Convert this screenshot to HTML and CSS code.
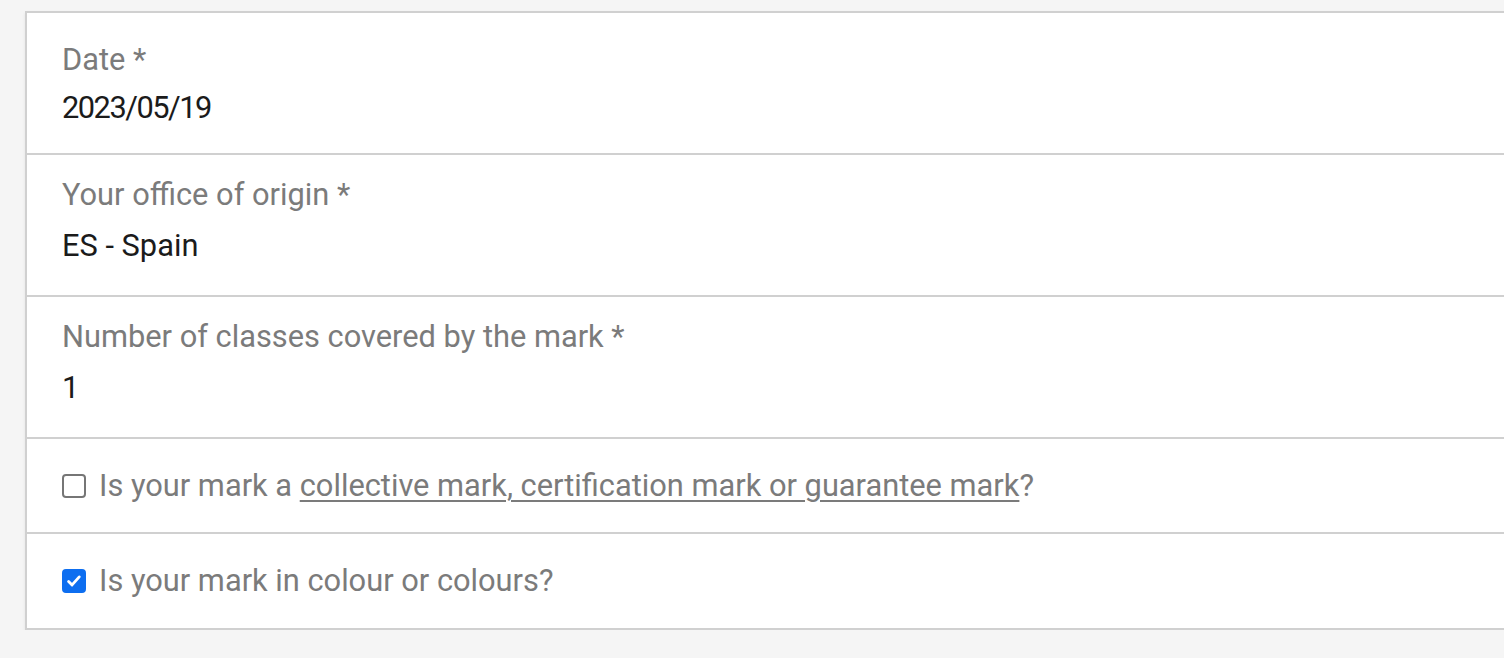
FILE: index.html
```html
<!DOCTYPE html>
<html lang="en">
<head>
<meta charset="utf-8">
<title>Trade mark details</title>
<link rel="stylesheet" href="styles.css">
</head>
<body>
<div class="page">
  <section class="panel">
    <div class="field field-first">
      <div class="label">Date *</div>
      <div class="value value-num">2023/05/19</div>
    </div>
    <div class="field">
      <div class="label">Your office of origin *</div>
      <div class="value">ES - Spain</div>
    </div>
    <div class="field">
      <div class="label">Number of classes covered by the mark *</div>
      <div class="value">1</div>
    </div>
    <div class="check-row">
      <span class="box"></span>
      <span class="check-text">Is your mark a <a class="link" href="#">collective mark, certification mark or guarantee mark</a>?</span>
    </div>
    <div class="check-row">
      <span class="box checked">
        <svg viewBox="0 0 24 24" width="24" height="24"><path d="M5.5 12.5l4.2 4.2 8.6-9.6" fill="none" stroke="#fff" stroke-width="3.4" stroke-linecap="round" stroke-linejoin="round"/></svg>
      </span>
      <span class="check-text">Is your mark in colour or colours?</span>
    </div>
  </section>
</div>
</body>
</html>
```
FILE: styles.css
```css
html, body {
  margin: 0;
  padding: 0;
  background: #f5f5f5;
}
body {
  font-family: Roboto, "Liberation Sans", sans-serif;
  overflow: hidden;
}
.page {
  padding: 11px 0 0 25px;
}
.panel {
  width: 1520px;
  background: #fff;
  border: 2px solid #d0d0d0;
  box-shadow: 0 2px 3px rgba(0,0,0,0.08);
}
.field {
  height: 142px;
  box-sizing: border-box;
  padding: 22px 0 0 35px;
  border-bottom: 2px solid #d0d0d0;
}
.field-first {
  padding-top: 29px;
}
.label {
  font-size: 30.8px;
  line-height: 36px;
  color: #7b7b7b;
}
.value {
  margin-top: 15px;
  font-size: 30.8px;
  line-height: 36px;
  color: #1b1b1b;
}
.field-first .value {
  margin-top: 12px;
}
.value-num {
  letter-spacing: -1.5px;
}
.check-row {
  height: 95px;
  box-sizing: border-box;
  display: flex;
  align-items: center;
  padding-left: 35px;
  border-bottom: 2px solid #d0d0d0;
}
.check-row:last-child {
  height: 94px;
  border-bottom: none;
}
.box {
  width: 24px;
  height: 24px;
  box-sizing: border-box;
  border: 2px solid #767676;
  border-radius: 4px;
  margin-right: 13px;
  flex: none;
  display: flex;
  align-items: center;
  justify-content: center;
}
.box.checked {
  background: #0d6ef0;
  border-color: #0d6ef0;
}
.box svg {
  width: 22px;
  height: 22px;
}
.check-text {
  font-size: 30.8px;
  line-height: 36px;
  color: #7b7b7b;
}
.link {
  color: #7b7b7b;
  text-decoration: underline;
  text-decoration-thickness: 2px;
  text-underline-offset: 4px;
}
```
